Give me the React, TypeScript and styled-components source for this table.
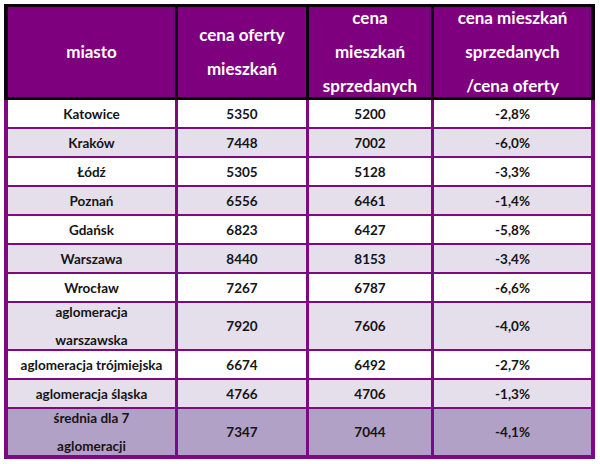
import React from "react";
import styled, { createGlobalStyle } from "styled-components";

const Global = createGlobalStyle`
  html, body { margin: 0; padding: 0; background: #ffffff; }
  body { width: 600px; height: 464px; overflow: hidden; }
`;

const COLS = "167px 128px 122px 157px";

const Page = styled.div`
  padding: 4px 5px 0 4px;
  font-family: Lato, "Open Sans", "Liberation Sans", sans-serif;
  font-weight: 700;
`;

const Table = styled.div`
  width: 591px;
  display: flex;
  flex-direction: column;
`;

const HeaderGrid = styled.div`
  display: grid;
  grid-template-columns: ${COLS};
  column-gap: 3px;
  background: #0c000c;
  padding: 3px 4px 3px 4px;
`;

const HeadCell = styled.div`
  height: 90px;
  background: #7f007f;
  color: #ffffff;
  font-size: 17px;
  line-height: 34px;
  display: flex;
  align-items: center;
  justify-content: center;
  text-align: center;
  white-space: pre-line;
`;

const DataGrid = styled.div`
  display: grid;
  grid-template-columns: ${COLS};
  column-gap: 3px;
  row-gap: 2px;
  background: #7e0a80;
  padding: 0 4px 4px 4px;
`;

type Tone = "white" | "light" | "dark";

const toneBg: Record<Tone, string> = {
  white: "#ffffff",
  light: "#e5dfec",
  dark: "#b2a1c7",
};

const Cell = styled.div<{ $tone: Tone; $tall: boolean }>`
  height: ${(p) => (p.$tall ? 46 : 27)}px;
  background: ${(p) => toneBg[p.$tone]};
  color: #161416;
  font-size: 13.5px;
  line-height: 28px;
  display: flex;
  align-items: center;
  justify-content: center;
  text-align: center;
  white-space: pre-line;
`;

const headers = [
  "miasto",
  "cena oferty\nmieszkań",
  "cena\nmieszkań\nsprzedanych",
  "cena mieszkań\nsprzedanych\n/cena oferty",
];

const rows: { city: string; offer: string; sold: string; pct: string; tall?: boolean }[] = [
  { city: "Katowice", offer: "5350", sold: "5200", pct: "-2,8%" },
  { city: "Kraków", offer: "7448", sold: "7002", pct: "-6,0%" },
  { city: "Łódź", offer: "5305", sold: "5128", pct: "-3,3%" },
  { city: "Poznań", offer: "6556", sold: "6461", pct: "-1,4%" },
  { city: "Gdańsk", offer: "6823", sold: "6427", pct: "-5,8%" },
  { city: "Warszawa", offer: "8440", sold: "8153", pct: "-3,4%" },
  { city: "Wrocław", offer: "7267", sold: "6787", pct: "-6,6%" },
  { city: "aglomeracja\nwarszawska", offer: "7920", sold: "7606", pct: "-4,0%", tall: true },
  { city: "aglomeracja trójmiejska", offer: "6674", sold: "6492", pct: "-2,7%" },
  { city: "aglomeracja śląska", offer: "4766", sold: "4706", pct: "-1,3%" },
  { city: "średnia dla 7\naglomeracji", offer: "7347", sold: "7044", pct: "-4,1%", tall: true },
];

export default function App() {
  return (
    <>
      <Global />
      <Page>
        <Table>
          <HeaderGrid>
            {headers.map((h) => (
              <HeadCell key={h}>{h}</HeadCell>
            ))}
          </HeaderGrid>
          <DataGrid>
            {rows.map((r, i) => {
              const tone: Tone = i === rows.length - 1 ? "dark" : i % 2 === 0 ? "white" : "light";
              const tall = !!r.tall;
              return (
                <React.Fragment key={r.city}>
                  <Cell $tone={tone} $tall={tall}>{r.city}</Cell>
                  <Cell $tone={tone} $tall={tall}>{r.offer}</Cell>
                  <Cell $tone={tone} $tall={tall}>{r.sold}</Cell>
                  <Cell $tone={tone} $tall={tall}>{r.pct}</Cell>
                </React.Fragment>
              );
            })}
          </DataGrid>
        </Table>
      </Page>
    </>
  );
}
